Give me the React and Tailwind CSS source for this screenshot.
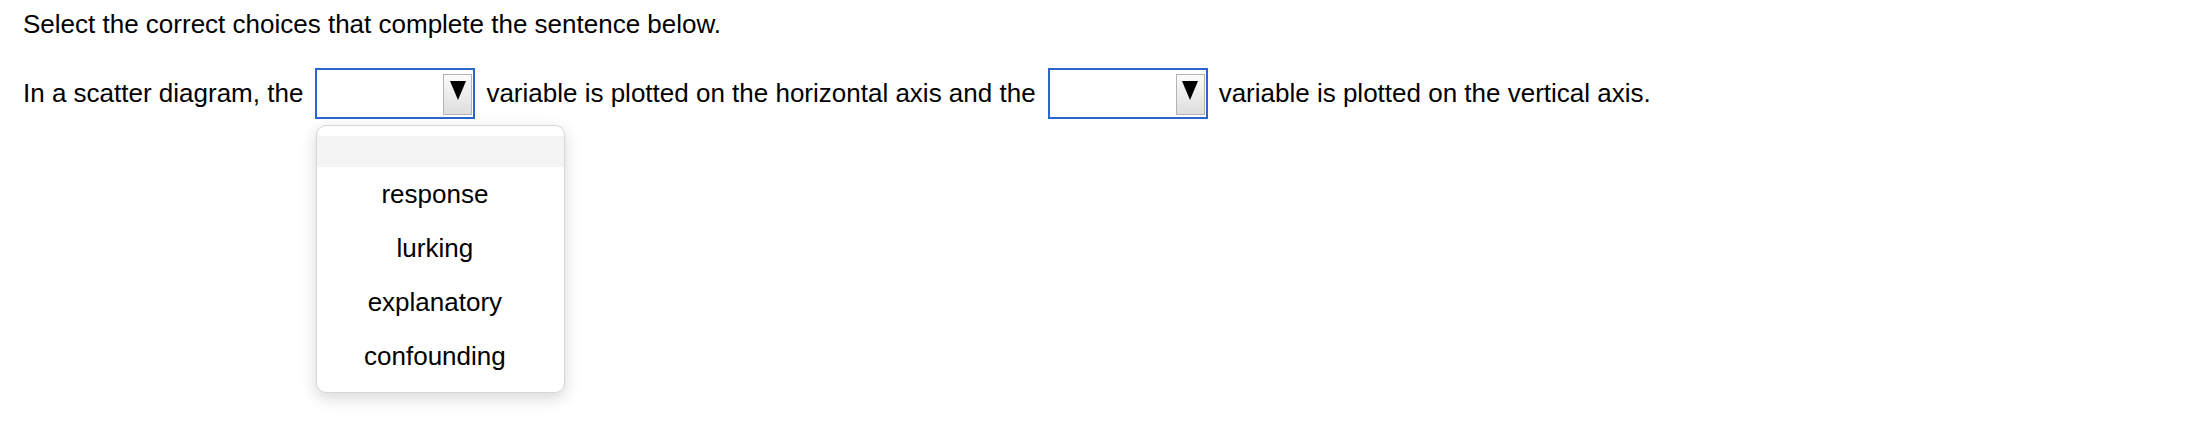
import { useState } from 'react';

const OPTIONS = ['response', 'lurking', 'explanatory', 'confounding'];

function Arrow() {
  return (
    <div className="absolute right-[1px] top-[4px] w-[29px] h-[41px] border border-[#b4b4b4] bg-gradient-to-b from-[#fbfbfb] to-[#dedede] flex justify-center pt-[6px]">
      <svg width="16" height="19" viewBox="0 0 16 19">
        <polygon points="0,0 16,0 8,19" fill="#000" />
      </svg>
    </div>
  );
}

function Choice({ open, options }) {
  return (
    <div className="relative shrink-0 w-[160px] h-[51px] border-2 border-[#2b66cf] bg-white ml-[12px] mr-[11px]">
      <Arrow />
      {open && (
        <div className="absolute left-[-1px] top-[55px] z-10 w-[249px] rounded-[10px] border border-[#d6d6d6] bg-white pt-[10px] pb-[9px] shadow-[0_5px_16px_rgba(0,0,0,0.16)]">
          <div className="h-[31px] bg-[#f4f4f4]" />
          {options.map((opt) => (
            <div key={opt} className="h-[54px] flex items-center justify-center pr-[12px]">
              {opt}
            </div>
          ))}
        </div>
      )}
    </div>
  );
}

export default function App() {
  const [open] = useState(true);

  return (
    <div className="min-h-[446px] bg-white text-black pl-[23px] pt-[9px] font-['Liberation_Sans',Arial,sans-serif] text-[26px]">
      <div className="leading-[30px]">Select the correct choices that complete the sentence below.</div>
      <div className="mt-[29px] flex items-center h-[51px] whitespace-nowrap">
        <span>In a scatter diagram, the</span>
        <Choice open={open} options={OPTIONS} />
        <span>variable is plotted on the horizontal axis and the</span>
        <Choice open={false} options={OPTIONS} />
        <span>variable is plotted on the vertical axis.</span>
      </div>
    </div>
  );
}
